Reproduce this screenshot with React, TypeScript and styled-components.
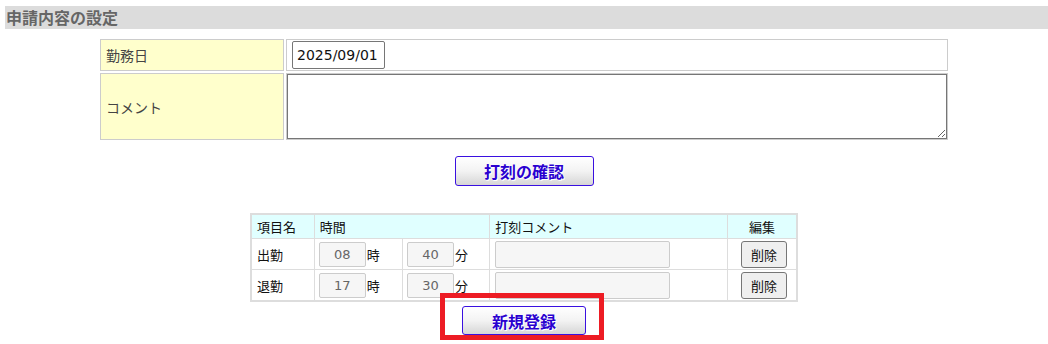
import styled, { createGlobalStyle } from "styled-components";

const FONT = `"DejaVu Sans", "Noto Sans CJK JP", sans-serif`;

const GlobalStyle = createGlobalStyle`
  body {
    margin: 0;
    font-family: ${FONT};
    background: #fff;
    color: #222;
  }
`;

type Punch = {
  id: number;
  name: string;
  hour: string;
  minute: string;
};

const punches: Punch[] = [
  { id: 1, name: "出勤", hour: "08", minute: "40" },
  { id: 2, name: "退勤", hour: "17", minute: "30" },
];

const App = () => {
  return (
    <>
      <GlobalStyle />
      <Page>
        <SectionTitle>申請内容の設定</SectionTitle>

        <FormTable>
          <tbody>
            <tr>
              <LabelCell>勤務日</LabelCell>
              <ValueCell>
                <DateInput type="text" defaultValue="2025/09/01" />
              </ValueCell>
            </tr>
            <tr>
              <LabelCell>コメント</LabelCell>
              <ValueCell $flush>
                <CommentArea />
              </ValueCell>
            </tr>
          </tbody>
        </FormTable>

        <ButtonRow $top={14}>
          <ActionButton $width={139} $height={30}>
            打刻の確認
          </ActionButton>
        </ButtonRow>

        <PunchTable>
          <colgroup>
            <col style={{ width: 63 }} />
            <col style={{ width: 88 }} />
            <col style={{ width: 87 }} />
            <col style={{ width: 237 }} />
            <col style={{ width: 69 }} />
          </colgroup>
          <thead>
            <tr>
              <HeadCell>項目名</HeadCell>
              <HeadCell colSpan={2}>時間</HeadCell>
              <HeadCell>打刻コメント</HeadCell>
              <HeadCell $center>編集</HeadCell>
            </tr>
          </thead>
          <tbody>
            {punches.map((p) => (
              <tr key={p.id}>
                <BodyCell>{p.name}</BodyCell>
                <BodyCell $tight>
                  <TimeInput readOnly value={p.hour} />
                  <Unit>時</Unit>
                </BodyCell>
                <BodyCell $tight>
                  <TimeInput readOnly value={p.minute} />
                  <Unit>分</Unit>
                </BodyCell>
                <BodyCell>
                  <PunchComment readOnly value="" />
                </BodyCell>
                <BodyCell $center>
                  <DeleteButton>削除</DeleteButton>
                </BodyCell>
              </tr>
            ))}
          </tbody>
        </PunchTable>

        <ButtonRow $top={4}>
          <Highlight>
            <ActionButton $width={124} $height={29}>
              新規登録
            </ActionButton>
            <RedFrame />
          </Highlight>
        </ButtonRow>
      </Page>
    </>
  );
};

const Page = styled.div`
  padding: 6px 0 12px 5px;
`;

const SectionTitle = styled.h2`
  margin: 0;
  height: 23px;
  line-height: 23px;
  padding-left: 1px;
  background: #dcdcdc;
  color: #666;
  font-size: 16px;
  font-weight: bold;
  font-family: "Noto Sans CJK JP", sans-serif;
`;

const FormTable = styled.table`
  width: 852px;
  margin: 8px 0 0 93px;
  border-spacing: 2px;
  font-size: 14px;
`;

const LabelCell = styled.td`
  width: 172px;
  padding: 0 5px;
  background: #ffffcc;
  border: 1px solid #cccccc;
  color: #444;
  vertical-align: middle;
`;

const ValueCell = styled.td<{ $flush?: boolean }>`
  border: 1px solid #cccccc;
  padding: ${(p) => (p.$flush ? "0" : "1px 5px")};
  height: ${(p) => (p.$flush ? "65px" : "auto")};
`;

const DateInput = styled.input`
  box-sizing: border-box;
  display: block;
  width: 93px;
  height: 28px;
  padding: 0 4px;
  border: 1px solid #767676;
  border-radius: 2px;
  font-family: ${FONT};
  font-size: 14px;
  color: #111;
`;

const CommentArea = styled.textarea`
  box-sizing: border-box;
  display: block;
  width: 100%;
  height: 65px;
  margin: 0;
  border: 1px solid #767676;
  border-radius: 0;
`;

const ButtonRow = styled.div<{ $top: number }>`
  display: flex;
  justify-content: center;
  margin-top: ${(p) => p.$top}px;
  padding-right: 5px;
`;

const ActionButton = styled.button<{ $width: number; $height: number }>`
  width: ${(p) => p.$width}px;
  height: ${(p) => p.$height}px;
  padding: 0;
  border: 1px solid #3a10e0;
  border-radius: 3px;
  background: linear-gradient(#ffffff 0%, #f3f3f3 50%, #d6d6d6 100%);
  color: #2a00d0;
  font-family: "Noto Sans CJK JP", sans-serif;
  font-size: 16px;
  font-weight: bold;
  text-shadow: 0 0 2px #fff, 1px 1px 0 #fff;
  cursor: pointer;
`;

const PunchTable = styled.table`
  width: 548px;
  margin: 27px 0 0 245px;
  border-collapse: collapse;
  table-layout: fixed;
  border: 2px solid #dddddd;
  font-size: 13px;
`;

const HeadCell = styled.th<{ $center?: boolean }>`
  height: 23px;
  padding: 0 5px;
  background: #e0ffff;
  border: 1px solid #dddddd;
  font-weight: normal;
  text-align: ${(p) => (p.$center ? "center" : "left")};
  color: #111;
`;

const BodyCell = styled.td<{ $center?: boolean; $tight?: boolean }>`
  height: 30px;
  padding: ${(p) => (p.$tight ? "0 0 0 4px" : "0 5px")};
  border: 1px solid #dddddd;
  text-align: ${(p) => (p.$center ? "center" : "left")};
  vertical-align: middle;
  color: #111;
  white-space: nowrap;
`;

const TimeInput = styled.input`
  box-sizing: border-box;
  width: 47px;
  height: 25px;
  padding: 0;
  border: 1px solid #cccccc;
  border-radius: 2px;
  background: #f6f6f6;
  color: #666;
  text-align: center;
  font-family: ${FONT};
  font-size: 13px;
  vertical-align: middle;
`;

const Unit = styled.span`
  margin-left: 1px;
  vertical-align: middle;
`;

const PunchComment = styled.input`
  box-sizing: border-box;
  display: block;
  width: 175px;
  height: 27px;
  border: 1px solid #cccccc;
  border-radius: 2px;
  background: #f6f6f6;
`;

const DeleteButton = styled.button`
  box-sizing: border-box;
  width: 46px;
  height: 27px;
  margin-left: 4px;
  padding: 0;
  border: 1px solid #767676;
  border-radius: 3px;
  background: #efefef;
  color: #111;
  font-family: ${FONT};
  font-size: 13px;
`;

const Highlight = styled.div`
  position: relative;
  display: flex;
`;

const RedFrame = styled.div`
  position: absolute;
  top: -13px;
  bottom: -5px;
  left: -22px;
  right: -18px;
  border: 5px solid #ed1c24;
  pointer-events: none;
`;

export default App;
